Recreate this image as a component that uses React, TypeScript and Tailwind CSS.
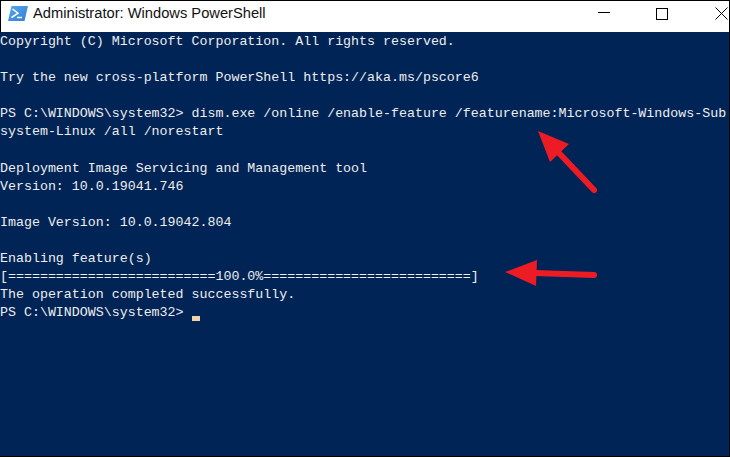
import React from 'react';

const lines = [
  'Copyright (C) Microsoft Corporation. All rights reserved.',
  '',
  'Try the new cross-platform PowerShell https://aka.ms/pscore6',
  '',
  'PS C:\\WINDOWS\\system32> dism.exe /online /enable-feature /featurename:Microsoft-Windows-Sub',
  'system-Linux /all /norestart',
  '',
  'Deployment Image Servicing and Management tool',
  'Version: 10.0.19041.746',
  '',
  'Image Version: 10.0.19042.804',
  '',
  'Enabling feature(s)',
  '[==========================100.0%==========================]',
  'The operation completed successfully.',
];

function PsIcon() {
  return (
    <svg width="20" height="15" viewBox="0 0 20 15" className="shrink-0">
      <defs>
        <linearGradient id="ps" x1="0" y1="0" x2="1" y2="1">
          <stop offset="0" stopColor="#5aa7ea" />
          <stop offset="1" stopColor="#2f7fd6" />
        </linearGradient>
      </defs>
      <path d="M3.5 0 H20 L16.5 15 H0 Z" fill="url(#ps)" />
      <path d="M4.5 3 L10 7.2 L3.5 11.5" fill="none" stroke="#fff" strokeWidth="1.5" />
      <path d="M9 11.5 H14" stroke="#fff" strokeWidth="1.5" />
    </svg>
  );
}

export default function App() {
  return (
    <div className="relative w-[730px] h-[457px] overflow-hidden bg-[#012456] border-r border-b border-black flex flex-col">
      <div className="h-[32px] shrink-0 bg-white border-t border-l border-black flex items-center pl-[7px] pb-[6px]">
        <PsIcon />
        <span className="ml-[5px] text-[14.7px] text-[#111] font-['Liberation_Sans',sans-serif]">Administrator: Windows PowerShell</span>
        <div className="ml-auto flex items-center">
          <div className="w-[46px] flex justify-center pb-[2px]"><div className="w-[12px] h-px bg-black" /></div>
          <div className="w-[46px] flex justify-center ml-[12px]"><div className="w-[12px] h-[12px] border border-black" /></div>
          <div className="w-[16px] flex justify-center ml-[28px]">
            <svg width="13" height="13" viewBox="0 0 13 13"><path d="M0.5 0.5 L12.5 12.5 M12.5 0.5 L0.5 12.5" stroke="#000" strokeWidth="1" fill="none" /></svg>
          </div>
        </div>
      </div>
      <div className="pt-[1px] font-['Liberation_Mono',monospace] text-[13.3px] leading-[18.1px] text-[#eeeeee] whitespace-pre">
        {lines.map((l, i) => (
          <div key={i} className="h-[18.1px]">{l}</div>
        ))}
        <div className="h-[18.1px] flex">
          <span>{'PS C:\\WINDOWS\\system32> '}</span>
          <span className="w-[8px] h-[5px] bg-[#f0d3a8] mt-[12px]" />
        </div>
      </div>
      <svg width="730" height="457" viewBox="0 0 730 457" className="absolute left-0 top-0 pointer-events-none">
        <path d="M538 131 L569 144 L550 162 Z" fill="#ed1c24" />
        <path d="M558 152 L594 190" stroke="#ed1c24" strokeWidth="6" strokeLinecap="round" fill="none" />
        <path d="M505 272 L537 260 L536 286 Z" fill="#ed1c24" />
        <path d="M535 273 L594 275" stroke="#ed1c24" strokeWidth="6" strokeLinecap="round" fill="none" />
      </svg>
    </div>
  );
}
